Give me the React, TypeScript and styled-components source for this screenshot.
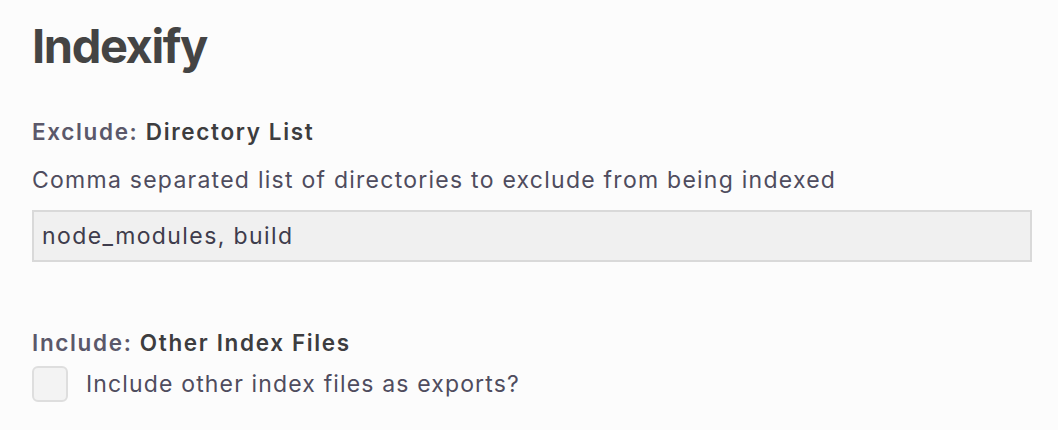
import React from "react";
import styled, { createGlobalStyle } from "styled-components";

const Global = createGlobalStyle`
  html, body { margin: 0; padding: 0; background: #fcfcfc; }
  body { font-family: Inter, "Noto Sans", sans-serif; }
`;

const Page = styled.div`
  padding: 17px 26px 0 32px;
  display: flex;
  flex-direction: column;
`;

const Title = styled.h1`
  margin: 0;
  font-size: 47px;
  line-height: 58px;
  font-weight: 700;
  color: #444444;
  letter-spacing: -1.4px;
`;

const Section = styled.div<{ $top: number }>`
  margin-top: ${(p) => p.$top}px;
  display: flex;
  flex-direction: column;
`;

const Label = styled.div`
  font-size: 22.5px;
  line-height: 30px;
  font-weight: 600;
  color: #5b586a;
  letter-spacing: 1.65px;
`;

const Strong = styled.span`
  color: #3d3d3f;
`;

const Desc = styled.div`
  font-size: 23px;
  line-height: 30px;
  margin-top: 18px;
  color: #4f4c5e;
  letter-spacing: 1.25px;
`;

const Input = styled.div`
  margin-top: 15px;
  height: 48px;
  border: 2px solid #d9d9d9;
  background: #f0f0f0;
  box-sizing: content-box;
  display: flex;
  align-items: center;
  padding: 0 8px;
  font-size: 23px;
  letter-spacing: 1.4px;
  color: #3e3c4c;
`;

const CheckRow = styled.label`
  display: flex;
  align-items: center;
  gap: 18px;
  margin-top: 8px;
`;

const Box = styled.span`
  width: 32px;
  height: 32px;
  border: 2px solid #dedede;
  border-radius: 6px;
  background: #f3f3f3;
`;

const CheckText = styled.span`
  font-size: 23px;
  letter-spacing: 1.15px;
  color: #4f4c5e;
`;

export default function App() {
  return (
    <>
      <Global />
      <Page>
        <Title>Indexify</Title>
        <Section $top={42}>
          <Label>
            Exclude: <Strong>Directory List</Strong>
          </Label>
          <Desc>Comma separated list of directories to exclude from being indexed</Desc>
          <Input>node_modules, build</Input>
        </Section>
        <Section $top={66}>
          <Label>
            Include: <Strong>Other Index Files</Strong>
          </Label>
          <CheckRow>
            <Box />
            <CheckText>Include other index files as exports?</CheckText>
          </CheckRow>
        </Section>
      </Page>
    </>
  );
}
